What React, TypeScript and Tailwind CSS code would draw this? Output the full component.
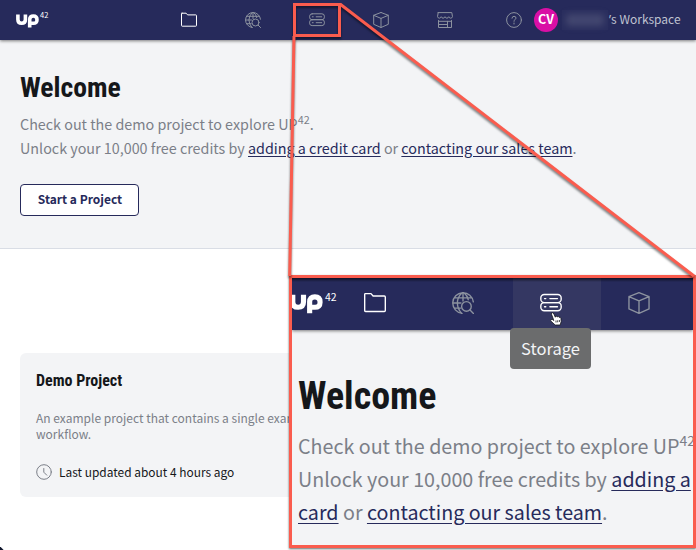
import React from 'react';

type IconName = 'folder' | 'globe' | 'storage' | 'cube' | 'store' | 'help' | 'clock';

const shapes: Record<IconName, React.ReactNode> = {
  folder: <path d="M1 1.200h4.100l1.500 1.700h8.200q.7 0 .7.7v9.900q0 .7-.7.7H1.200q-.7 0-.7-.7V1.700q0-.5.5-.5Z" />,
  globe: (
    <>
      <path d="M7.300 15.500A7.500 7.500 0 1 1 15.500 7.200M7.300.5Q3.800 4 3.900 8t3 7.500M8.700.5q2.500 2 3.100 5.100M8 .5v6M1.700 4.300h12.600M.5 8h6M1.700 11.700h4.500" />
      <circle cx="10.500" cy="10.500" r="3.500" />
      <path d="m13.100 13.100 2.500 2.500" />
    </>
  ),
  storage: (
    <>
      <rect x=".6" y="1.800" width="14.800" height="5.900" rx="2.500" />
      <rect x=".6" y="7.700" width="14.800" height="5.900" rx="2.500" />
      <path d="M3.300 4.800h.9M7.200 4.800h5.500M3.300 10.700h.9M7.200 10.700h5.500" />
    </>
  ),
  cube: <path d="m8 .5 7.300 2.800v9L8 15.500.7 12.300v-9L8 .5ZM.7 3.300 8 6.400l7.300-3.100M8 6.400v9.100" />,
  store: (
    <>
      <path d="M1.200.6h13.600l.7 4.100q-.5 1.500-1.800 1.500t-1.900-1.500q-.7 1.500-1.900 1.500T8 4.700q-.7 1.500-1.900 1.500T4.200 4.700q-.7 1.500-1.900 1.500T.5 4.700L1.200.6Z" />
      <path d="M1.500 8.500v7h13v-7M1.500 9.300h13M10.500 9.300v6.200M1.500 12.500h9" />
    </>
  ),
  help: (
    <>
      <circle cx="8" cy="8" r="7.400" />
      <path d="M6 6.200Q6.100 4.300 8 4.300t2 1.700C10 7.400 8 7.500 8 9.300M8 11v1" />
    </>
  ),
  clock: (
    <>
      <circle cx="8" cy="8" r="7.300" />
      <path d="M7.800 4.500v3.700l3 3" />
    </>
  ),
};

function Icon({ name, className }: { name: IconName; className: string }) {
  return (
    <svg viewBox="0 0 16 16" fill="none" stroke="currentColor" strokeWidth="1" strokeLinecap="round" strokeLinejoin="round" className={className}>
      {shapes[name]}
    </svg>
  );
}

function Logo({ className }: { className: string }) {
  return (
    <svg viewBox="0 0 23 14" fill="none" stroke="currentColor" className={className}>
      <path d="M1.900.5v5q0 3.800 3.750 3.800T9.400 5.500v-5" strokeWidth="3.600" />
      <path d="M13.700 13.400V5.500q0-3.500 3.650-3.500T21 5.700t-3.700 3.600h-3.600" strokeWidth="3.600" />
    </svg>
  );
}

const condensed = "origin-left whitespace-nowrap font-['Roboto_Condensed','Roboto',sans-serif] font-bold text-[#15171a] [font-stretch:75%]";

export default function App() {
  return (
    <div className="relative h-[550px] w-[696px] overflow-hidden bg-white font-['Noto_Sans_CJK_SC',sans-serif] text-[#7b7f88]">
      <header className="relative z-10 flex h-10 items-center bg-[#262a5b] shadow-[0_1px_3px_rgba(0,0,0,0.5)]">
        <div className="flex w-[157px] items-start pl-4 text-white">
          <Logo className="mt-px h-[14px] w-[23px]" />
          <span className="ml-px text-[7.500px] leading-[4px]">42</span>
        </div>
        <nav className="flex text-[#8c929f]">
          <div className="flex w-16 justify-center text-white"><Icon name="folder" className="size-4" /></div>
          <div className="flex w-16 justify-center"><Icon name="globe" className="size-4" /></div>
          <div className="flex w-16 justify-center"><Icon name="storage" className="size-4" /></div>
          <div className="flex w-16 justify-center"><Icon name="cube" className="size-4" /></div>
          <div className="flex w-16 justify-center"><Icon name="store" className="size-4" /></div>
        </nav>
        <Icon name="help" className="ml-[29px] size-4 text-[#8c929f]" />
        <div className="ml-3 flex size-6 items-center justify-center rounded-full bg-[#d90fa5] pb-px text-[12.500px] font-bold text-white">CV</div>
        <div className="ml-1 h-5 w-[46px] bg-[#2a2e5e] p-1"><div className="h-3 rounded bg-[#42466f] blur-[3px]" /></div>
        <span className="ml-px whitespace-nowrap pb-px text-[12px] text-[#bfc2d0]"><span className="font-['Noto_Sans']">’</span>s Workspace</span>
      </header>
      <section className="h-[209px] border-b border-[#d9dde5] bg-[#f3f4f6] px-5 pt-8">
        <h1 className={`${condensed} text-[27.700px] leading-8`}>Welcome</h1>
        <p className="mt-2 whitespace-nowrap text-[14.330px] leading-6">
          Check out the demo project to explore UP<sup className="relative -top-[6px] align-baseline text-[10.800px] leading-none">42</sup>.<br />
          Unlock your 10,000 free credits by <a className="text-[#262a5b] underline underline-offset-2">adding a credit card</a> or <a className="text-[#262a5b] underline underline-offset-2">contacting our sales team</a>.
        </p>
        <button className="mt-6 flex h-8 w-[119px] items-center justify-center rounded border border-[#262a5b] bg-white pb-[3px] pl-px text-[12px] font-bold text-[#262a5b]">Start a Project</button>
      </section>
      <main className="px-5 pt-[104px]">
        <article className="h-36 w-[330px] rounded-md bg-[#f3f4f6] px-4 pt-[18px]">
          <h2 className={`${condensed} text-[16px] leading-5`}>Demo Project</h2>
          <p className="mt-[19px] whitespace-nowrap text-[12px] leading-4">An example project that contains a single example<br />workflow.</p>
          <div className="mt-5 flex items-center text-[11.930px] leading-5 text-[#15171a]">
            <Icon name="clock" className="mr-[7px] size-4 text-[#7b7f88]" />Last updated about 4 hours ago
          </div>
        </article>
      </main>
      <div className="absolute bottom-[-5px] left-[-5px] size-2 rotate-45 bg-[#10172d]" />

      <div className="absolute left-[289px] top-[275px] z-20 h-[273px] w-[407px] overflow-hidden border-[3px] border-[#fa5c4e] bg-[#f3f4f6] shadow-[0_1px_2px_rgba(0,0,0,0.6)]">
        <div className="relative flex h-[52px] items-center bg-[#262a5b] shadow-[0_1px_3px_rgba(0,0,0,0.5)]">
          <div className="-ml-[2px] flex w-[47px] items-start text-white">
            <Logo className="h-[20px] w-[33px] shrink-0" />
            <span className="ml-[2px] text-[10.500px] leading-[6px]">42</span>
          </div>
          <nav className="flex h-full pb-0.5 text-[#8c929f]">
            <div className="flex w-[88px] items-center justify-center pr-3 text-white"><Icon name="folder" className="size-[22px]" /></div>
            <div className="flex w-[88px] items-center justify-center pr-3"><Icon name="globe" className="size-[22px]" /></div>
            <div className="-mb-0.5 flex w-[88px] items-center justify-center bg-[#343762] pb-0.5 pr-3 text-white"><Icon name="storage" className="size-[22px]" /></div>
            <div className="flex w-[88px] items-center justify-center pr-3"><Icon name="cube" className="size-[22px]" /></div>
          </nav>
          <div className="absolute inset-x-0 top-0 h-1 bg-linear-to-b from-black/60 to-transparent" />
        </div>
        <div className="pl-[6px] pt-[43px]">
          <h2 className={`${condensed} text-[38px] leading-[46px]`}>Welcome</h2>
          <p className="mt-[10px] w-[470px] whitespace-nowrap text-[19.700px] leading-[33px]">
            Check out the demo project to explore UP<sup className="relative -top-[8px] align-baseline text-[14px] leading-none">42</sup><br />
            Unlock your 10,000 free credits by <a className="text-[#262a5b] underline underline-offset-3">adding a</a><br />
            <a className="text-[#262a5b] underline underline-offset-3">card</a> or <a className="text-[#262a5b] underline underline-offset-3">contacting our sales team</a>.
          </p>
        </div>
        <div className="absolute left-[218px] top-[50px] flex h-[41px] w-[81px] items-center justify-center rounded bg-[#6b6c6d] text-[16.500px] text-[#f3f4f6]">Storage</div>
        <svg className="absolute left-[258px] top-[34px] h-[14px] w-3" viewBox="0 0 12 14" fill="white" stroke="#15171a" strokeWidth=".8">
          <path d="M3.500 7.500 1.500 2.300Q1.200.7 2.300.7T4 2.300l1.300 2.900.2-.8q1.300-.7 1.800.5 1.300-.8 1.700.4 1.500-.5 1.900.8l.3 3.400-1 3.500H5.200L1 9.200Q.2 8 1.200 7.500T3.800 8.500ZM6 8.500v2M7.700 8.300v2M9.400 8v2" />
        </svg>
      </div>

      <svg className="absolute inset-0 z-30 h-[550px] w-[696px] drop-shadow-[0_2px_1px_rgba(0,0,0,0.5)]" fill="none" stroke="#fa5c4e" strokeWidth="3">
        <rect x="294.500" y="4.500" width="45" height="31" />
        <path d="M294 36 289.700 276M340 4l354 272" />
      </svg>
    </div>
  );
}
